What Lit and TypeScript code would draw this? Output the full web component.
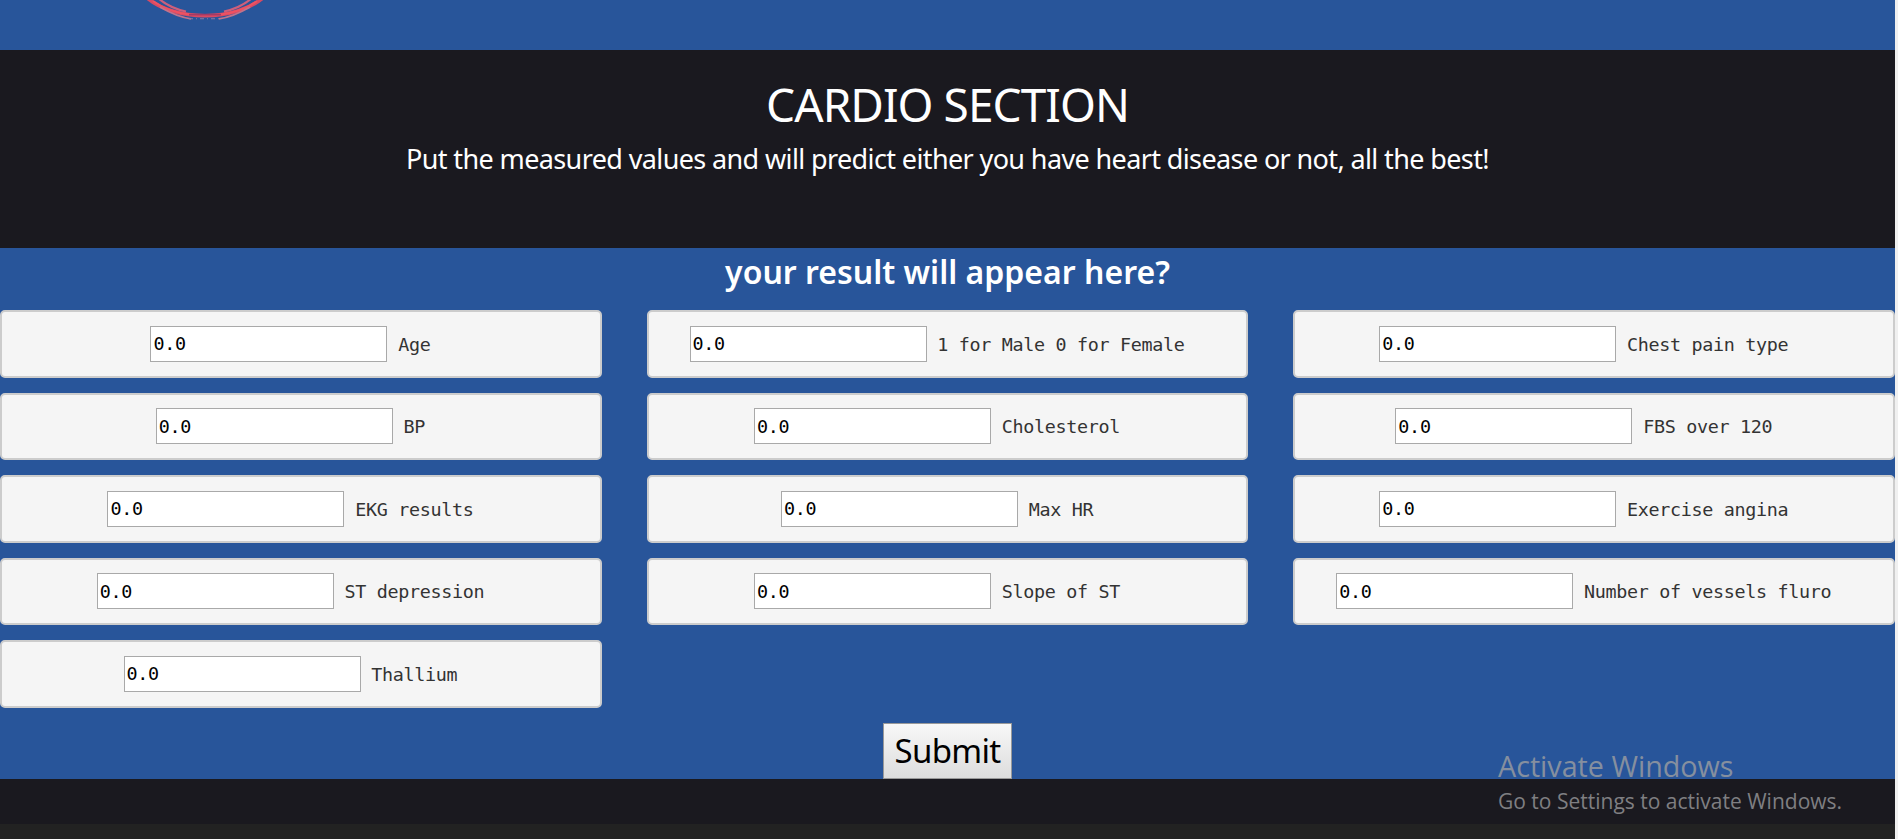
import { LitElement, html, css } from "lit";
import { customElement, property } from "lit/decorators.js";

@customElement("measure-field")
class MeasureField extends LitElement {
  @property() label = "";
  static styles = css`
    :host { display: flex; align-items: center; justify-content: center; box-sizing: border-box; height: 67.5px;
      border: 2px solid #ccc; border-radius: 5px; background: #f5f5f5; }
    .box { box-sizing: border-box; width: 237px; height: 36px; margin: 0 10.8px 0 0; padding: 0 2px;
      border: 1px solid #a9a9a9; border-radius: 0; background: #fff; color: #000;
      font: 18.4px "DejaVu Sans Mono", monospace; letter-spacing: -0.3px; outline: none; }
    .label { margin-right: 20.8px; padding-top: 1px; color: #333; font: 18.4px "DejaVu Sans Mono", monospace;
      letter-spacing: -0.32px; white-space: pre; }
  `;
  render() {
    return html`<input class="box" value="0.0" /><span class="label">${this.label}</span>`;
  }
}

@customElement("app-root")
class AppRoot extends LitElement {
  static styles = css`
    :host { display: block; position: relative; box-sizing: border-box; height: 839px; overflow: hidden;
      padding-right: 3px; background: #f0f0f0; font-family: "Noto Sans", sans-serif; color: #fff; }
    .banner { height: 50px; background: #28559a; }
    .seal { display: block; margin-left: 135px; }
    .intro { box-sizing: border-box; height: 198px; padding-top: 21px; background: #1a191f; text-align: center; }
    .title { margin: 0; font-size: 46px; line-height: 67px; font-weight: 400; letter-spacing: -0.95px; }
    .lead { margin: 1px 0 0; font-size: 27px; line-height: 40px; letter-spacing: -0.62px; }
    .form { box-sizing: border-box; height: 531px; background: #28559a; text-align: center; }
    .result { margin: 0; height: 62px; font-size: 32px; line-height: 48px; font-weight: 600; }
    .grid { display: grid; grid-template-columns: repeat(3, 1fr); column-gap: 45px; row-gap: 15px; }
    .submit { display: block; box-sizing: border-box; width: 129px; height: 56px; margin: 15px auto 0; padding: 0;
      border: 1px solid #999; border-radius: 0; background: linear-gradient(#f8f8f8, #ddd); color: #000;
      font: 400 33px "Noto Sans", sans-serif; letter-spacing: -0.7px; }
    .strip { height: 45px; background: #1a191f; }
    .footer { height: 15px; background: #222; }
    .notice { position: absolute; left: 1498px; top: 746px; font-family: "Open Sans", sans-serif; color: #858f9f; white-space: nowrap; }
    .notice-title { font-size: 28.7px; line-height: 40px; }
    .notice-text { font-size: 21px; line-height: 30px; color: #7f7f82; }
  `;
  fields = ["Age", "1 for Male 0 for Female", "Chest pain type", "BP", "Cholesterol", "FBS over 120", "EKG results",
    "Max HR", "Exercise angina", "ST depression", "Slope of ST", "Number of vessels fluro", "Thallium"];
  render() {
    return html`
      <div class="banner">
        <svg class="seal" width="140" height="24" viewBox="135 0 140 24" fill="none">
          <path d="M146 -3C174 22 236 22 264 -3" stroke="#d84a63" stroke-width="3.6"/>
          <path d="M153 1C164 9 176 13 190 14.5M220 14.5C234 13 246 9 257 1" stroke="#ee5262" stroke-width="2"/>
          <path d="M158 -2C166 5 174 9 186 11.5M252 -2C244 5 236 9 224 11.5" stroke="#cc5f7c" stroke-width="2.2"/>
          <path d="M160 7C172 14 181 17.5 191 18.8M250 7C238 14 229 17.5 219 18.8" stroke="#c0738c" stroke-width="1.8"/>
          <path d="M189 14.6H221" stroke="#a43a66" stroke-width="1.6"/>
          <path d="M189 18.8H222" stroke="#8b79a5" stroke-width="1.1" stroke-dasharray="4 3 1 3"/>
        </svg>
      </div>
      <header class="intro">
        <h1 class="title">CARDIO SECTION</h1>
        <p class="lead">Put the measured values and will predict either you have heart disease or not, all the best!</p>
      </header>
      <section class="form">
        <h2 class="result">your result will appear here?</h2>
        <div class="grid">${this.fields.map((f) => html`<measure-field .label=${f}></measure-field>`)}</div>
        <button class="submit">Submit</button>
      </section>
      <div class="strip"></div>
      <div class="footer"></div>
      <aside class="notice">
        <div class="notice-title">Activate Windows</div>
        <div class="notice-text">Go to Settings to activate Windows.</div>
      </aside>`;
  }
}
